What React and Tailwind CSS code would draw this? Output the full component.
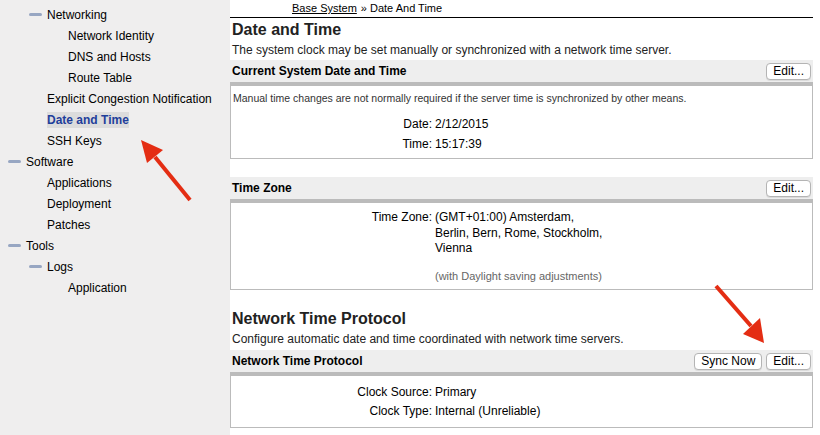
import React from 'react';

const nav = [
  { label: 'Networking', indent: 47, dash: true },
  { label: 'Network Identity', indent: 68 },
  { label: 'DNS and Hosts', indent: 68 },
  { label: 'Route Table', indent: 68 },
  { label: 'Explicit Congestion Notification', indent: 47 },
  { label: 'Date and Time', indent: 47, active: true },
  { label: 'SSH Keys', indent: 47 },
  { label: 'Software', indent: 26, dash: true },
  { label: 'Applications', indent: 47 },
  { label: 'Deployment', indent: 47 },
  { label: 'Patches', indent: 47 },
  { label: 'Tools', indent: 26, dash: true },
  { label: 'Logs', indent: 47, dash: true },
  { label: 'Application', indent: 68 },
];

const Button = ({ children }) => (
  <button className="h-[17px] px-[6px] bg-white border border-[#b4b4b4] rounded-[4px] text-[12px] leading-none text-black shadow-[0_1px_0_rgba(0,0,0,0.08)]">
    {children}
  </button>
);

const SectionHeader = ({ title, children }) => (
  <div className="h-[22px] bg-[#eeeeee] flex items-center justify-between pl-[2px] pr-[2px]">
    <span className="text-[12px] font-bold text-black">{title}</span>
    <div className="flex gap-[4px]">{children}</div>
  </div>
);

const Box = ({ className, children }) => (
  <div className={`border border-[#bbbbbb] border-t-[4px] bg-white ${className}`}>{children}</div>
);

// label column ends at x=432 in every box
const Row = ({ label, children, className = '' }) => (
  <div className={`flex text-[12px] text-black ${className}`}>
    <div className="w-[201px] text-right shrink-0">{label}</div>
    <div className="pl-[3px]">{children}</div>
  </div>
);

export default function App() {
  return (
    <div className="relative w-[820px] h-[435px] overflow-hidden flex bg-white font-['Liberation_Sans',Arial,sans-serif] text-black">
      <aside className="w-[230px] shrink-0 bg-[#efeeee] pt-[4px]">
        {nav.map((item) => (
          <div key={item.label} className="h-[21px] relative flex items-center text-[12px]" style={{ paddingLeft: item.indent }}>
            {item.dash && (
              <span className="absolute top-[9px] w-[13px] h-[3px] rounded-full bg-[#97a6c2]" style={{ left: item.indent - 18 }} />
            )}
            {item.active ? (
              <span className="bg-[#dcdcdc] h-[16px] flex items-center font-bold text-[#1f3f9b]">{item.label}</span>
            ) : (
              <span>{item.label}</span>
            )}
          </div>
        ))}
      </aside>

      <main className="flex-1 pr-[7px] flex flex-col">
        <div className="h-[18px] border-b border-black flex items-center pl-[62px] text-[11px]">
          <span className="underline">Base System</span>
          <span className="ml-[4px]">» Date And Time</span>
        </div>
        <h1 className="pl-[2px] mt-[2px] text-[16px] font-bold leading-[20px] text-[#222]">Date and Time</h1>
        <p className="pl-[2px] text-[12px] leading-[18px] text-[#222] mt-[1px]">
          The system clock may be set manually or synchronized with a network time server.
        </p>
        <div className="mt-[1px]">
          <SectionHeader title="Current System Date and Time">
            <Button>Edit...</Button>
          </SectionHeader>
          <Box className="h-[77px] pt-[5px]">
            <div className="pl-[2px] text-[10.5px] text-[#333] leading-[14px]">
              Manual time changes are not normally required if the server time is synchronized by other means.
            </div>
            <Row label="Date:" className="mt-[11px] leading-[16px]">2/12/2015</Row>
            <Row label="Time:" className="mt-[4px] leading-[16px]">15:17:39</Row>
          </Box>
        </div>

        <div className="mt-[18px]">
          <SectionHeader title="Time Zone">
            <Button>Edit...</Button>
          </SectionHeader>
          <Box className="h-[91px] pt-[7px]">
            <Row label="Time Zone:" className="leading-[15.5px]">
              <div className="w-[172px]">(GMT+01:00) Amsterdam, Berlin, Bern, Rome, Stockholm, Vienna</div>
              <div className="text-[11px] leading-[14px] text-[#666] mt-[12px]">(with Daylight saving adjustments)</div>
            </Row>
          </Box>
        </div>

        <h1 className="pl-[2px] mt-[19px] text-[16px] font-bold leading-[20px] text-[#222]">Network Time Protocol</h1>
        <p className="pl-[2px] text-[12px] leading-[18px] text-[#222] mt-[1px]">
          Configure automatic date and time coordinated with network time servers.
        </p>
        <div className="mt-[2px]">
          <SectionHeader title="Network Time Protocol">
            <Button>Sync Now</Button>
            <Button>Edit...</Button>
          </SectionHeader>
          <Box className="h-[56px] pt-[8px]">
            <Row label="Clock Source:" className="leading-[16px]">Primary</Row>
            <Row label="Clock Type:" className="mt-[3px] leading-[16px]">Internal (Unreliable)</Row>
          </Box>
        </div>
      </main>

      <svg className="absolute inset-0 pointer-events-none" width="820" height="435" viewBox="0 0 820 435">
        <line x1="190" y1="200" x2="155" y2="157" stroke="#e42d13" strokeWidth="4" />
        <polygon points="141,140 163,150 147,163" fill="#e42d13" />
        <line x1="716" y1="286" x2="751" y2="326" stroke="#e42d13" strokeWidth="4" />
        <polygon points="764,343 743,334 760,318" fill="#e42d13" />
      </svg>
    </div>
  );
}
